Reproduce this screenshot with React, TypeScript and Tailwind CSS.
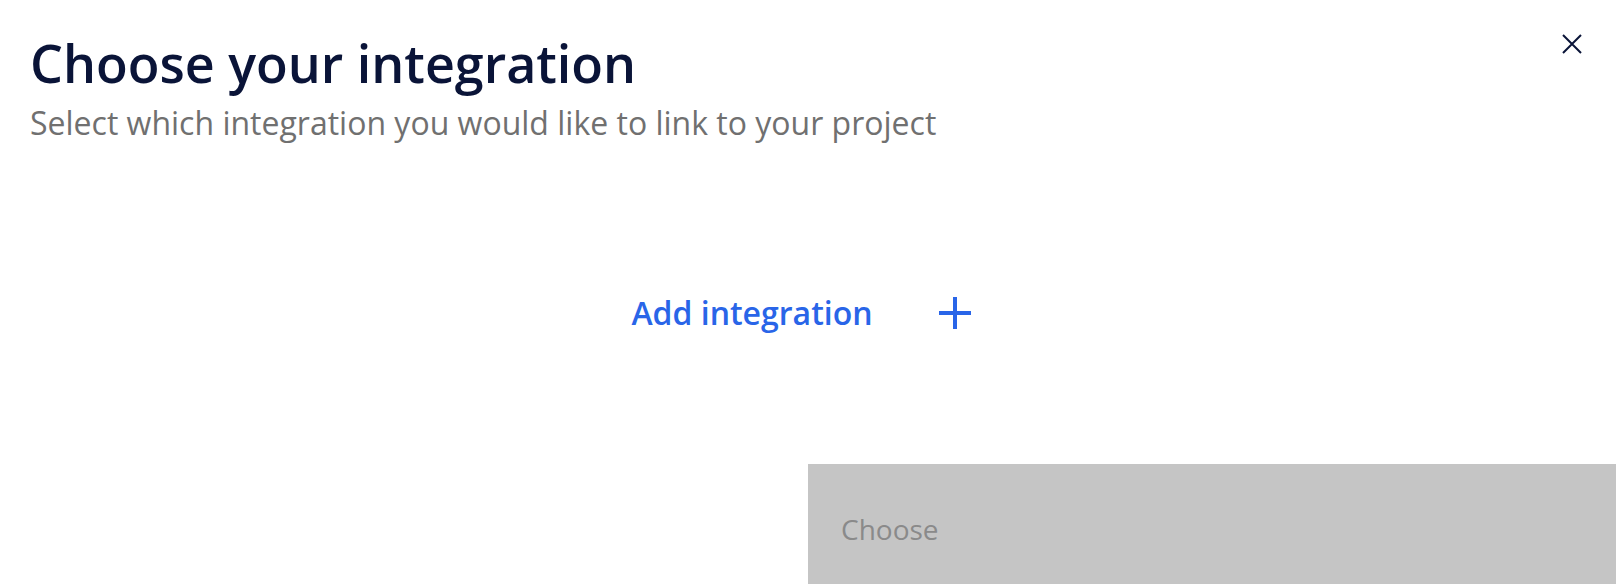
export default function App() {
  return (
    <div className="relative flex h-[584px] w-[1616px] flex-col overflow-hidden bg-white font-['Open_Sans',sans-serif]">
      <button
        type="button"
        className="absolute right-[34px] top-[34px] flex h-[20px] w-[20px] items-center justify-center text-[#0a1438]"
      >
        <svg width="20" height="20" viewBox="0 0 20 20" fill="none" stroke="currentColor" strokeWidth="2">
          <path d="M1 1L19 19M19 1L1 19" />
        </svg>
      </button>

      <div className="px-[30px] pt-[31px]">
        <h1 className="text-[52px] font-semibold leading-[64px] text-[#0a1438]">
          Choose your integration
        </h1>
        <p className="mt-[8px] text-[32px] leading-[40px] text-[#707070]">
          Select which integration you would like to link to your project
        </p>
      </div>

      <div className="flex flex-1 items-center justify-center pt-[18px] pr-[14px]">
        <button
          type="button"
          className="flex items-center gap-[66px] text-[32px] font-semibold text-[#2965e8]"
        >
          Add integration
          <svg width="32" height="32" viewBox="0 0 32 32" fill="none" stroke="currentColor" strokeWidth="4">
            <path d="M16 0V32M0 16H32" />
          </svg>
        </button>
      </div>

      <div className="grid h-[120px] grid-cols-2">
        <div />
        <button
          type="button"
          className="flex items-center bg-[#c5c5c5] px-[33px] pt-[10px] text-left text-[28px] text-[#8a8a8a]"
        >
          Choose
        </button>
      </div>
    </div>
  );
}
